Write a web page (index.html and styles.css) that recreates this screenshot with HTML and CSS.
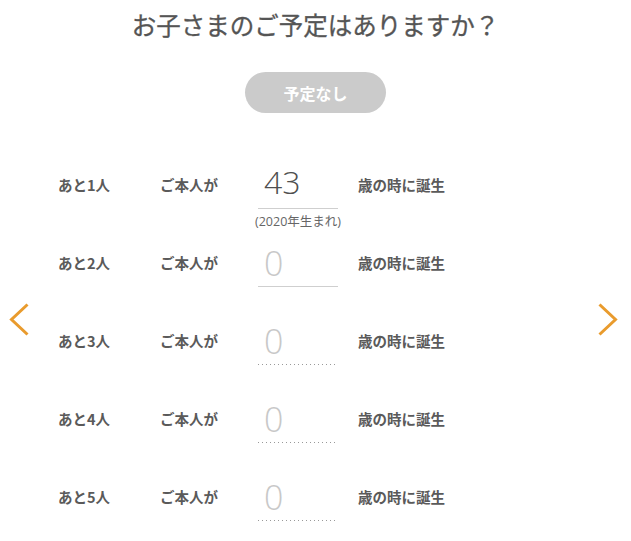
FILE: index.html
```html
<!DOCTYPE html>
<html lang="ja">
  <head>
    <meta charset="UTF-8" />
    <meta name="viewport" content="width=device-width, initial-scale=1.0" />
    <title>お子さまのご予定</title>
    <link rel="stylesheet" href="styles.css">
  </head>
  <body>
    <div class="page">
      <h1>お子さまのご予定はありますか？</h1>
      <div class="none-wrap">
        <button type="button" class="btn-none">予定なし</button>
      </div>

      <div class="slider">
        <div class="nav nav-prev">
          <svg width="25" height="37" viewBox="0 0 25 37">
            <polyline points="20.5,3.5 4.5,18.5 20.5,33.5" />
          </svg>
        </div>

        <div class="rows">
          <div class="row">
            <div class="label">あと1人</div>
            <div class="label">ご本人が</div>
            <div class="field">
              <div class="num solid">43</div>
              <div class="note">(2020年生まれ)</div>
            </div>
            <div class="label after">歳の時に誕生</div>
          </div>
          <div class="row">
            <div class="label">あと2人</div>
            <div class="label">ご本人が</div>
            <div class="field">
              <div class="num solid empty">0</div>
            </div>
            <div class="label after">歳の時に誕生</div>
          </div>
          <div class="row">
            <div class="label">あと3人</div>
            <div class="label">ご本人が</div>
            <div class="field">
              <div class="num dotted empty">0</div>
            </div>
            <div class="label after">歳の時に誕生</div>
          </div>
          <div class="row">
            <div class="label">あと4人</div>
            <div class="label">ご本人が</div>
            <div class="field">
              <div class="num dotted empty">0</div>
            </div>
            <div class="label after">歳の時に誕生</div>
          </div>
          <div class="row">
            <div class="label">あと5人</div>
            <div class="label">ご本人が</div>
            <div class="field">
              <div class="num dotted empty">0</div>
            </div>
            <div class="label after">歳の時に誕生</div>
          </div>
        </div>

        <div class="nav nav-next">
          <svg width="25" height="37" viewBox="0 0 25 37">
            <polyline points="4.5,3.5 20.5,18.5 4.5,33.5" />
          </svg>
        </div>
      </div>
    </div>
  </body>
</html>
```

FILE: styles.css
```css
body {
  margin: 0;
  background: #fff;
  font-family: "Open Sans", "Noto Sans CJK JP", sans-serif;
  color: #555;
}
.page {
  width: 631px;
  height: 541px;
  overflow: hidden;
}
h1 {
  margin: 0;
  padding-top: 8px;
  font-family: "Noto Sans CJK JP", sans-serif;
  font-size: 24.5px;
  line-height: 34px;
  font-weight: 400;
  text-align: center;
  color: #555;
  -webkit-text-stroke: 0.3px #555;
}
.none-wrap {
  display: flex;
  justify-content: center;
  margin-top: 30px;
}
.btn-none {
  width: 141px;
  height: 41px;
  border: none;
  border-radius: 21px;
  background: #cbcbcb;
  color: #fff;
  font-family: "Noto Sans CJK JP", sans-serif;
  font-size: 16px;
  font-weight: bold;
  padding: 0;
}
.slider {
  display: flex;
  justify-content: space-between;
  margin-top: 53px;
}
.nav {
  width: 38px;
  padding-top: 135px;
}
.nav-prev {
  padding-left: 7px;
  box-sizing: border-box;
}
.nav-next {
  padding-left: 2px;
  box-sizing: border-box;
}
.nav svg {
  display: block;
}
.nav polyline {
  fill: none;
  stroke: #e99b2d;
  stroke-width: 3;
}
.rows {
  flex: 1;
  padding-left: 20px;
}
.row {
  display: grid;
  grid-template-columns: 102px 98px 80px auto;
  align-items: start;
  height: 78px;
}
.label {
  font-family: "Noto Sans CJK JP", sans-serif;
  font-size: 14.5px;
  font-weight: bold;
  line-height: 38px;
  color: #5a5a5a;
}
.after {
  margin-left: 20px;
}
.num {
  height: 42px;
  padding-left: 6px;
  font-size: 32px;
  font-weight: 300;
  line-height: 31px;
  color: #4f4f4f;
}
.num.empty {
  color: #c8c8c8;
  font-size: 34px;
  line-height: 39px;
}
.solid {
  border-bottom: 1px solid #cfcfcf;
}
.dotted {
  background-image: repeating-linear-gradient(to right, #999 0 1px, transparent 1px 4px);
  background-size: 100% 1px;
  background-repeat: no-repeat;
  background-position: left bottom;
  height: 43px;
}
.note {
  margin-top: 5px;
  margin-left: -10px;
  margin-right: -10px;
  font-size: 12.5px;
  line-height: 16px;
  text-align: center;
  color: #666;
  white-space: nowrap;
}
```
